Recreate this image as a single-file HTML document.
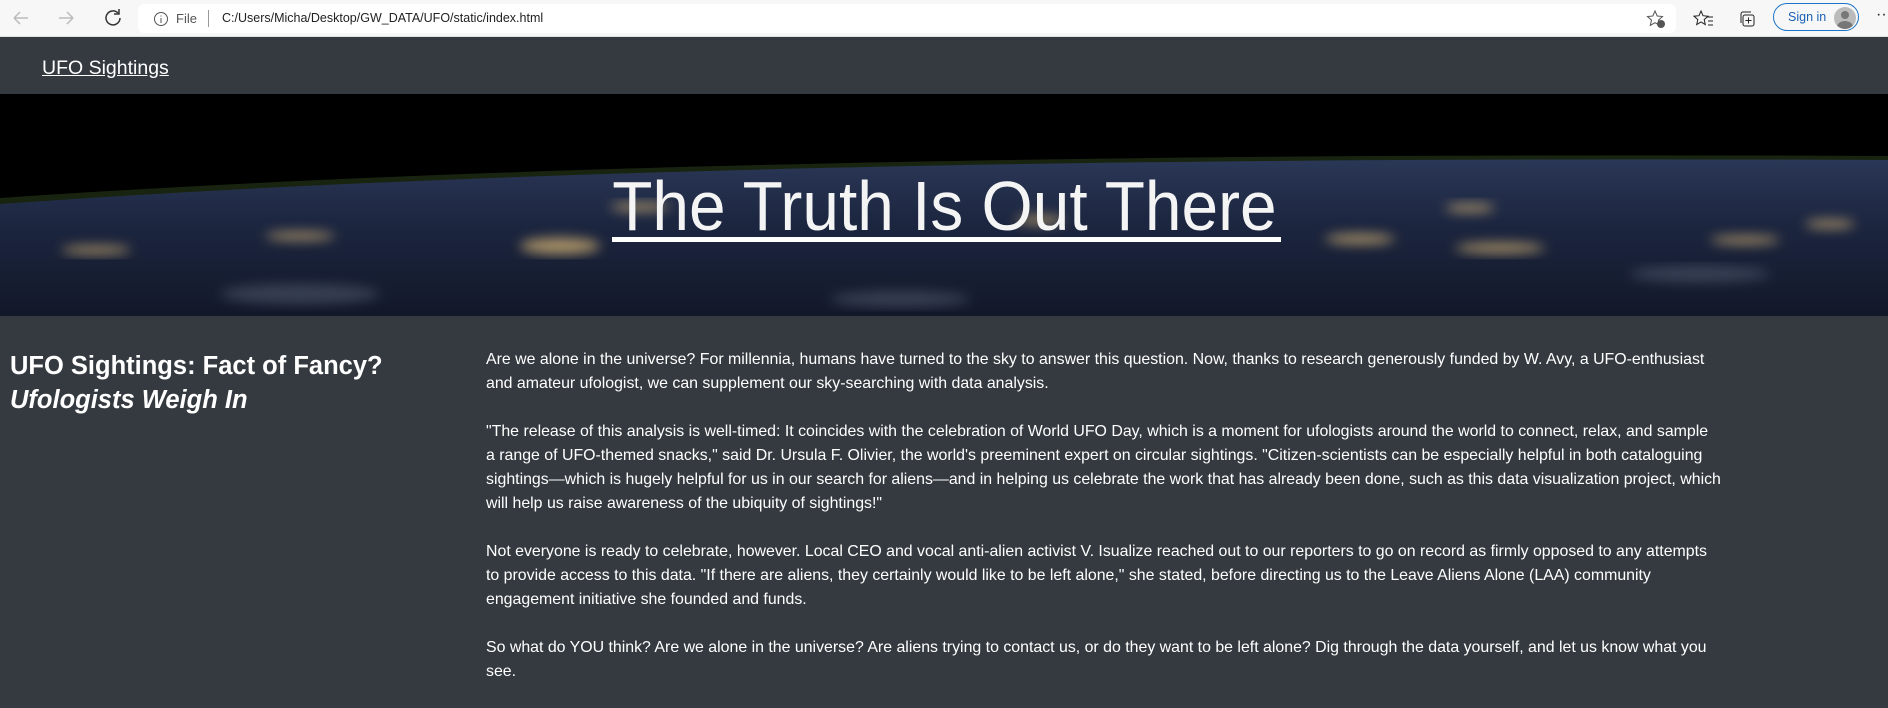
<!DOCTYPE html>
<html><head><meta charset="utf-8"><style>
html,body{margin:0;padding:0;width:1888px;height:692px;overflow:hidden;background:#343a40;font-family:"Liberation Sans",sans-serif;}
.tb{position:absolute;left:0;top:0;width:1888px;height:37px;background:#f7f7f7;border-bottom:1px solid #e0e0e0;box-sizing:border-box}
.addr{position:absolute;left:138px;top:4px;width:1538px;height:29px;background:#fff;border-radius:6px}
.tb .t{position:absolute;font-size:13px;color:#222;top:11px}
.nav{position:absolute;top:37px;left:0;width:1888px;height:57px;background:#343a40}
.nav a{position:absolute;left:42px;top:20px;color:#fff;font-size:19.5px;text-decoration:underline}
.hero{position:absolute;top:94px;left:0;width:1888px;height:222px;background:#000;overflow:hidden}
.title{position:absolute;left:0;width:1888px;top:72px;text-align:center;color:#f4f4f4}
.title span{display:inline-block;font-size:70px;transform:scaleX(0.94);line-height:80px;font-weight:normal}
.uline{position:absolute;left:612px;top:143px;width:669px;height:5px;background:#fff}
h2{position:absolute;left:10px;top:349px;margin:0;color:#fff;font-size:25.5px;line-height:34px;font-weight:bold}
h2 i{font-style:italic}
.txt{position:absolute;left:486px;top:348px;color:#fff;font-size:15.9px;line-height:24px;white-space:nowrap}
.txt p{margin:0 0 24px 0}
</style></head><body>
<div class="tb">
<svg width="140" height="37" style="position:absolute;left:0;top:0" fill="none" stroke="#bbb" stroke-width="1.5">
<path d="M14 18h14M14 18l6-6M14 18l6 6"/><path d="M73 18h-14M73 18l-6-6M73 18l-6 6"/>
<path d="M118 13a7 7 0 1 0 2 5" stroke="#333"/><path d="M119 9v5h-5" stroke="#333"/></svg>
<div class="addr"></div>
<svg width="16" height="16" style="position:absolute;left:153px;top:11px"><circle cx="8" cy="8" r="6.5" fill="none" stroke="#555"/><path d="M8 7v5M8 4.5v1" stroke="#555"/></svg>
<div class="t" style="left:176px;color:#555">File</div>
<div style="position:absolute;left:208px;top:10px;width:1px;height:17px;background:#999"></div>
<div class="t" style="left:222px;font-size:12.5px">C:/Users/Micha/Desktop/GW_DATA/UFO/static/index.html</div>
<svg width="20" height="20" style="position:absolute;left:1646px;top:9px"><path d="M9 2l2.2 5 5.3.5-4 3.6 1.2 5.3L9 13.7 4.3 16.4 5.5 11.1 1.5 7.5 6.8 7z" fill="none" stroke="#555"/><circle cx="15" cy="15" r="4" fill="#555"/></svg>
<svg width="22" height="20" style="position:absolute;left:1693px;top:9px"><path d="M8 2l2 4.7 5 .5-3.8 3.4 1.1 5L8 13 3.7 15.6l1.1-5L1 7.2l5-.5z" fill="none" stroke="#222"/><path d="M14 8h6M15 12h5M15 16h5" stroke="#222"/></svg>
<svg width="20" height="20" style="position:absolute;left:1737px;top:9px" fill="none" stroke="#222"><rect x="6" y="6" width="11" height="11" rx="2"/><path d="M4 14V5a2 2 0 0 1 2-2h8M11.5 8.5v6M8.5 11.5h6"/></svg>
<div style="position:absolute;left:1773px;top:3px;width:86px;height:28px;border:1.5px solid #1a73c8;border-radius:16px;box-sizing:border-box"></div>
<div class="t" style="left:1788px;top:10px;color:#1a5fb4;font-size:12.5px">Sign in</div>
<div style="position:absolute;left:1834px;top:7px;width:22px;height:22px;border-radius:50%;background:#bbb;overflow:hidden"><div style="position:absolute;left:7px;top:4px;width:8px;height:8px;border-radius:50%;background:#777"></div><div style="position:absolute;left:3px;top:14px;width:16px;height:12px;border-radius:50%;background:#777"></div></div>
<div class="t" style="left:1876px;top:6px;font-size:16px">···</div>
</div>
<div class="nav"><a>UFO Sightings</a></div>
<div class="hero">
<svg width="1888" height="222" style="position:absolute;left:0;top:0">
<defs><linearGradient id="g" x1="0" y1="0" x2="0" y2="1"><stop offset="0" stop-color="#2a3756"/><stop offset="0.4" stop-color="#1c2640"/><stop offset="1" stop-color="#121829"/></linearGradient>
<filter id="b"><feGaussianBlur stdDeviation="6"/></filter></defs>
<path d="M0,104 Q700,56 1888,62 L1888,68 Q700,62 0,112Z" fill="#18240f"/>
<path d="M0,110 Q700,60 1888,66 L1888,222 L0,222Z" fill="url(#g)"/>
<g fill="#e9c27a" filter="url(#b)" opacity="0.7">
<ellipse cx="560" cy="152" rx="40" ry="8"/><ellipse cx="300" cy="142" rx="35" ry="4"/><ellipse cx="96" cy="156" rx="35" ry="4"/>
<ellipse cx="1360" cy="145" rx="35" ry="5"/><ellipse cx="1500" cy="154" rx="45" ry="5"/><ellipse cx="1745" cy="146" rx="35" ry="4"/>
<ellipse cx="1470" cy="114" rx="25" ry="4"/><ellipse cx="640" cy="113" rx="30" ry="4"/><ellipse cx="1040" cy="126" rx="25" ry="4"/><ellipse cx="1830" cy="130" rx="25" ry="4"/>
</g>
<g fill="#8a93a6" filter="url(#b)" opacity="0.3"><ellipse cx="300" cy="200" rx="80" ry="10"/><ellipse cx="900" cy="205" rx="70" ry="8"/><ellipse cx="1700" cy="180" rx="70" ry="8"/></g>
</svg>
<div class="title"><span>The Truth Is Out There</span></div>
<div class="uline"></div>
</div>
<h2>UFO Sightings: Fact of Fancy?<br><i>Ufologists Weigh In</i></h2>
<div class="txt">
<p>Are we alone in the universe? For millennia, humans have turned to the sky to answer this question. Now, thanks to research generously funded by W. Avy, a UFO-enthusiast<br>and amateur ufologist, we can supplement our sky-searching with data analysis.</p>
<p>"The release of this analysis is well-timed: It coincides with the celebration of World UFO Day, which is a moment for ufologists around the world to connect, relax, and sample<br>a range of UFO-themed snacks," said Dr. Ursula F. Olivier, the world's preeminent expert on circular sightings. "Citizen-scientists can be especially helpful in both cataloguing<br>sightings—which is hugely helpful for us in our search for aliens—and in helping us celebrate the work that has already been done, such as this data visualization project, which<br>will help us raise awareness of the ubiquity of sightings!"</p>
<p>Not everyone is ready to celebrate, however. Local CEO and vocal anti-alien activist V. Isualize reached out to our reporters to go on record as firmly opposed to any attempts<br>to provide access to this data. "If there are aliens, they certainly would like to be left alone," she stated, before directing us to the Leave Aliens Alone (LAA) community<br>engagement initiative she founded and funds.</p>
<p>So what do YOU think? Are we alone in the universe? Are aliens trying to contact us, or do they want to be left alone? Dig through the data yourself, and let us know what you<br>see.</p>
</div>
</body></html>
